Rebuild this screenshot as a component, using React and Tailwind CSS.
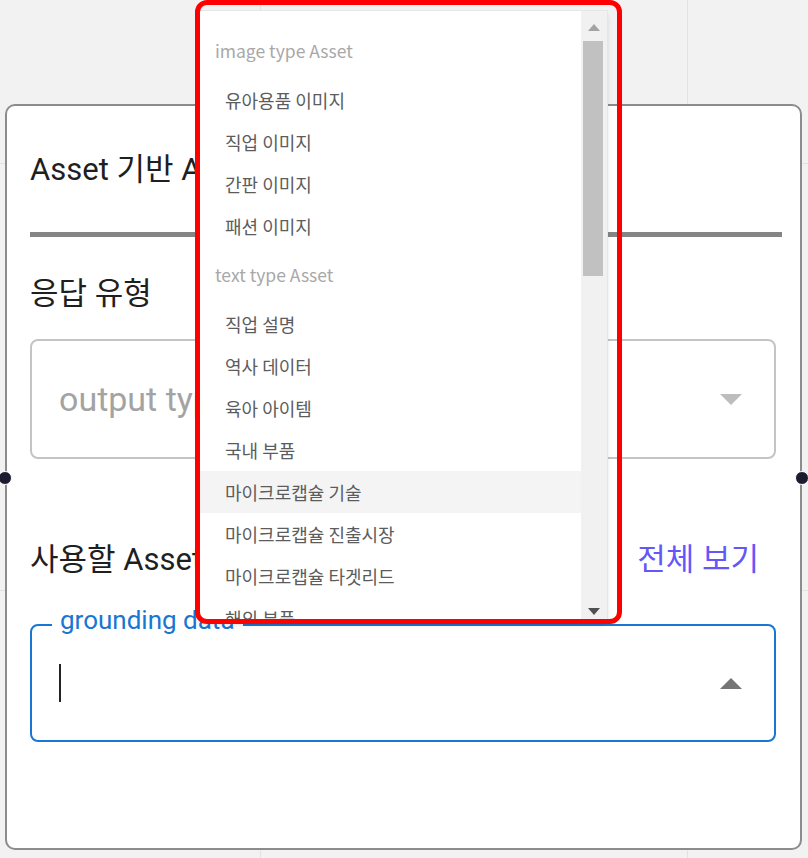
import React from "react";

const imageItems = ["유아용품 이미지", "직업 이미지", "간판 이미지", "패션 이미지"];
const textItems = [
  "직업 설명",
  "역사 데이터",
  "육아 아이템",
  "국내 부품",
  "마이크로캡슐 기술",
  "마이크로캡슐 진출시장",
  "마이크로캡슐 타겟리드",
  "해외 부품",
];

function GroupHeader({ children }) {
  return (
    <div className="h-[56px] flex items-center pl-[16px] text-[17.5px] text-[#a8a8a8]">
      {children}
    </div>
  );
}

function Item({ children, active }) {
  return (
    <div
      className={
        "h-[42px] flex items-center pl-[26px] text-[18px] text-[#5c5c5c] " +
        (active ? "bg-[#f4f4f4]" : "")
      }
    >
      {children}
    </div>
  );
}

export default function App() {
  const sans = { fontFamily: 'Roboto, "Noto Sans CJK KR", sans-serif' };
  return (
    <div className="relative w-[808px] h-[858px] bg-[#f2f2f2] overflow-hidden" style={sans}>
      {/* canvas grid */}
      <div className="absolute left-[260px] top-0 w-px h-full bg-[#e3e3e3]" />
      <div className="absolute left-[687px] top-0 w-px h-full bg-[#e3e3e3]" />
      <div className="absolute top-[163px] left-0 h-px w-full bg-[#e3e3e3]" />
      <div className="absolute top-[590px] left-0 h-px w-full bg-[#e3e3e3]" />

      {/* node card */}
      <div className="absolute left-[5px] top-[104px] w-[797px] h-[746px] bg-white border-2 border-[#8c8c8c] rounded-[10px]">
        <div className="flex flex-col pl-[23px] pr-[18px] pt-[44px]">
          <div className="h-[40px] flex items-center text-[31px] text-[#1f1f1f]">Asset 기반 Agent</div>
          <div className="mt-[42px] h-[5px] bg-[#858585]" />
          <div className="mt-[37px] h-[40px] flex items-center text-[31px] text-[#1f1f1f]">응답 유형</div>
          <div className="mt-[25px] mr-[6px] h-[120px] border-2 border-[#c4c4c4] rounded-[8px] flex items-center justify-between pl-[27px] pr-[32px]">
            <span className="text-[34px] text-[#a3a3a3]">output type</span>
            <svg width="22" height="11" viewBox="0 0 22 11">
              <path d="M0 0 L22 0 L11 11 Z" fill="#bdbdbd" />
            </svg>
          </div>
          <div className="mt-[81px] h-[40px] flex items-center justify-between text-[31px]">
            <span className="text-[#1f1f1f]">사용할 Asset</span>
            <span className="text-[#6457f9] mr-[23px]">전체 보기</span>
          </div>
          <div className="relative mt-[44px] mr-[6px] h-[118px] border-2 border-[#1976d2] rounded-[8px] flex items-center justify-between pl-[27px] pr-[32px]">
            <span className="absolute left-[20px] top-[-24px] px-[8px] bg-white text-[26px] leading-[36px] text-[#1976d2]">
              grounding data
            </span>
            <span className="w-[2px] h-[38px] bg-[#222]" />
            <svg width="22" height="11" viewBox="0 0 22 11">
              <path d="M0 11 L22 11 L11 0 Z" fill="#757575" />
            </svg>
          </div>
        </div>
        {/* handles */}
        <div className="absolute left-[-9px] top-[365px] w-[14px] h-[14px] rounded-full bg-[#1b1b2f] border border-white" />
        <div className="absolute right-[-9px] top-[365px] w-[14px] h-[14px] rounded-full bg-[#1b1b2f] border border-white" />
      </div>

      {/* dropdown popup */}
      <div
        className="absolute left-[198px] top-[10px] w-[410px] h-[612px] bg-white border border-[#e6e6e6] shadow-md overflow-hidden flex"
        style={{ fontFamily: '"Noto Sans CJK KR", "Noto Sans", sans-serif' }}
      >
        <div className="flex-1 pt-[12px]">
          <GroupHeader>image type Asset</GroupHeader>
          {imageItems.map((t) => (
            <Item key={t}>{t}</Item>
          ))}
          <GroupHeader>text type Asset</GroupHeader>
          {textItems.map((t) => (
            <Item key={t} active={t === "마이크로캡슐 기술"}>
              {t}
            </Item>
          ))}
        </div>
        <div className="w-[26px] bg-[#f1f1f1] flex flex-col items-center">
          <svg width="12" height="7" viewBox="0 0 12 7" className="mt-[13px]">
            <path d="M0 7 L12 7 L6 0 Z" fill="#a3a3a3" />
          </svg>
          <div className="mt-[10px] ml-[-2px] w-[20px] h-[235px] bg-[#c1c1c1]" />
          <div className="flex-1" />
          <svg width="12" height="7" viewBox="0 0 12 7" className="mb-[6px]">
            <path d="M0 0 L12 0 L6 7 Z" fill="#505050" />
          </svg>
        </div>
      </div>

      {/* red annotation frame */}
      <div className="absolute left-[195px] top-0 w-[427px] h-[624px] border-[5px] border-[#ff0000] rounded-[12px]" />
    </div>
  );
}
